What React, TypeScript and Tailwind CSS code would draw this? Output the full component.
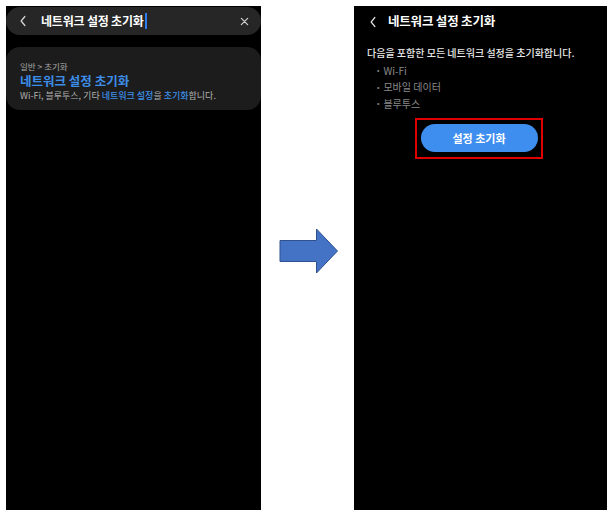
import React from 'react';

const font = { fontFamily: '"Noto Sans CJK KR", "Noto Sans", sans-serif' };

const ChevronLeft = ({ className }: { className?: string }) => (
  <svg viewBox="0 0 10 16" className={className} fill="none" stroke="currentColor" strokeWidth={1.6} strokeLinecap="round" strokeLinejoin="round">
    <path d="M7.5 2 L2.5 8 L7.5 14" />
  </svg>
);

const SearchScreen = () => (
  <div className="w-[255px] h-[504px] bg-black pt-px">
    {/* Search bar */}
    <div className="h-[28px] rounded-[14px] bg-[#262626] flex items-center pl-[13px] pr-[12px]">
      <ChevronLeft className="w-[8px] h-[12px] text-[#d8d8d8]" />
      <span className="ml-[14px] text-[12px] font-bold text-white leading-none tracking-[-0.2px]">
        네트워크 설정 초기화
      </span>
      <span className="ml-px w-[2px] h-[16px] bg-[#2f7cf0]" />
      <svg viewBox="0 0 10 10" className="ml-auto w-[9px] h-[9px] text-[#cfcfcf]" stroke="currentColor" strokeWidth={1.4} strokeLinecap="round">
        <path d="M1.5 1.5 L8.5 8.5 M8.5 1.5 L1.5 8.5" />
      </svg>
    </div>

    {/* Result card */}
    <div className="mt-[12px] h-[63px] rounded-[14px] bg-[#1c1c1c] pl-[14px] pt-[13px]">
      <div className="text-[8.5px] leading-[12px] text-[#a8a8a8]">일반 &gt; 초기화</div>
      <div className="text-[12.5px] leading-[17px] font-bold text-[#3d8ee8]">네트워크 설정 초기화</div>
      <div className="text-[9px] leading-[14px] text-[#b0b0b0]">
        Wi-Fi, 블루투스, 기타 <span className="text-[#3d8ee8] font-medium">네트워크 설정</span>을{' '}
        <span className="text-[#3d8ee8] font-medium">초기화</span>합니다.
      </div>
    </div>
  </div>
);

const ResetScreen = () => (
  <div className="w-[253px] h-[504px] bg-black">
    <div className="h-[30px] flex items-center pl-[15px] pt-[1px]">
      <ChevronLeft className="w-[8px] h-[12px] text-[#e0e0e0]" />
      <span className="ml-[11px] text-[12.5px] font-bold text-white leading-none tracking-[-0.2px]">
        네트워크 설정 초기화
      </span>
    </div>
    <div className="pl-[13px] pt-[10px]">
      <div className="text-[10px] leading-[14px] text-[#e8e8e8] font-medium">
        다음을 포함한 모든 네트워크 설정을 초기화합니다.
      </div>
      <ul className="mt-[2px] pl-[10px] text-[10px] text-[#8a8a8a]">
        {['Wi-Fi', '모바일 데이터', '블루투스'].map((item) => (
          <li key={item} className="flex items-center h-[16.5px]">
            <span className="mr-[4px] text-[7px]">•</span>
            {item}
          </li>
        ))}
      </ul>
    </div>
    <div className="mt-[6px] ml-[61px] w-[128px] h-[41px] border-2 border-[#e10000] flex items-center justify-center">
      <div className="w-[117px] h-[28px] rounded-full bg-[#3e8ef0] flex items-center justify-center text-[11px] font-bold text-white">
        설정 초기화
      </div>
    </div>
  </div>
);

export default function App() {
  return (
    <div className="w-[615px] h-[519px] bg-white flex items-start pt-[6px] pl-[6px]" style={font}>
      <SearchScreen />
      <div className="w-[93px] flex justify-center pt-[222px]">
        <svg viewBox="0 0 60 46" className="w-[60px] h-[46px] ml-[2px]">
          <path
            d="M1 12.5 H37.5 V1 L58.5 23 L37.5 45 V33.5 H1 Z"
            fill="#4472c4"
            stroke="#2f528f"
            strokeWidth={1}
          />
        </svg>
      </div>
      <ResetScreen />
    </div>
  );
}
